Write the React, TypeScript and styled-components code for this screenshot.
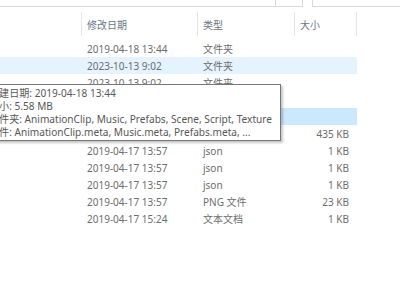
import * as React from "react";
import styled, { createGlobalStyle } from "styled-components";

const GlobalStyle = createGlobalStyle`
  html, body {
    margin: 0;
    padding: 0;
    background: #ffffff;
    overflow: hidden;
  }
  body {
    font-family: "Noto Sans", "Noto Sans CJK SC", sans-serif;
    font-size: 10px;
  }
`;

const Window = styled.div`
  position: relative;
  width: 400px;
  height: 300px;
  overflow: hidden;
  background: #ffffff;
`;

const AddressBar = styled.div`
  display: flex;
  height: 7px;
`;

const AddressBox = styled.div`
  width: 275px;
  border-right: 1px solid #d9d9d9;
  border-bottom: 1px solid #d9d9d9;
`;

const RefreshBox = styled.div`
  width: 26px;
  border-right: 1px solid #d9d9d9;
  border-bottom: 1px solid #d9d9d9;
  margin-right: 9px;
`;

const SearchBox = styled.div`
  flex: 1;
  border-left: 1px solid #d9d9d9;
  border-bottom: 1px solid #d9d9d9;
`;

const HeaderRow = styled.div`
  display: flex;
  height: 24px;
  margin-top: 5px;
  margin-bottom: 4px;
`;

const HeaderCell = styled.div<{ width: number }>`
  width: ${(p) => p.width}px;
  flex-shrink: 0;
  box-sizing: border-box;
  border-right: 1px solid #e5e5e5;
  padding-left: 5px;
  display: flex;
  align-items: center;
  color: #6b7585;
  font-size: 10px;
`;

const List = styled.div`
  display: flex;
  flex-direction: column;
`;

const Row = styled.div<{ state?: "hover" | "selected" }>`
  display: flex;
  height: 17px;
  width: 357px;
  align-items: center;
  background: ${(p) =>
    p.state === "selected" ? "#cce8ff" : p.state === "hover" ? "#e5f3ff" : "transparent"};
  color: #6d6d6d;
`;

const Cell = styled.div<{ width: number; right?: boolean }>`
  width: ${(p) => p.width}px;
  flex-shrink: 0;
  box-sizing: border-box;
  padding: 0 5px;
  white-space: nowrap;
  text-align: ${(p) => (p.right ? "right" : "left")};
`;

const Tooltip = styled.div`
  position: absolute;
  left: -18px;
  top: 84px;
  width: 299px;
  height: 57px;
  box-sizing: border-box;
  padding: 2px 6px 0 6px;
  background: #ffffff;
  border: 1px solid #767676;
  box-shadow: 2px 2px 2px rgba(0, 0, 0, 0.22);
  color: #575757;
  font-size: 10.1px;
  line-height: 13px;
  white-space: nowrap;
`;

const COLS = { name: 82, date: 116, type: 97, size: 62 };

type FileRow = {
  date: string;
  type: string;
  size: string;
  state?: "hover" | "selected";
};

const rows: FileRow[] = [
  { date: "2019-04-18 13:44", type: "文件夹", size: "" },
  { date: "2023-10-13 9:02", type: "文件夹", size: "", state: "hover" },
  { date: "2023-10-13 9:02", type: "文件夹", size: "" },
  { date: "2019-04-18 13:44", type: "文件夹", size: "" },
  { date: "2019-04-18 13:44", type: "文件夹", size: "", state: "selected" },
  { date: "2019-04-17 13:57", type: "META 文件", size: "435 KB" },
  { date: "2019-04-17 13:57", type: "json", size: "1 KB" },
  { date: "2019-04-17 13:57", type: "json", size: "1 KB" },
  { date: "2019-04-17 13:57", type: "json", size: "1 KB" },
  { date: "2019-04-17 13:57", type: "PNG 文件", size: "23 KB" },
  { date: "2019-04-17 15:24", type: "文本文档", size: "1 KB" },
];

export default function App() {
  return (
    <Window>
      <GlobalStyle />
      <AddressBar>
        <AddressBox />
        <RefreshBox />
        <SearchBox />
      </AddressBar>
      <HeaderRow>
        <HeaderCell width={COLS.name} />
        <HeaderCell width={COLS.date}>修改日期</HeaderCell>
        <HeaderCell width={COLS.type}>类型</HeaderCell>
        <HeaderCell width={COLS.size}>大小</HeaderCell>
      </HeaderRow>
      <List>
        {rows.map((r, i) => (
          <Row key={i} state={r.state}>
            <Cell width={COLS.name} />
            <Cell width={COLS.date}>{r.date}</Cell>
            <Cell width={COLS.type}>{r.type}</Cell>
            <Cell width={COLS.size - 3} right>
              {r.size}
            </Cell>
          </Row>
        ))}
      </List>
      <Tooltip>
        <div>创建日期: 2019-04-18 13:44</div>
        <div>大小: 5.58 MB</div>
        <div>文件夹: AnimationClip, Music, Prefabs, Scene, Script, Texture</div>
        <div>文件: AnimationClip.meta, Music.meta, Prefabs.meta, ...</div>
      </Tooltip>
    </Window>
  );
}
